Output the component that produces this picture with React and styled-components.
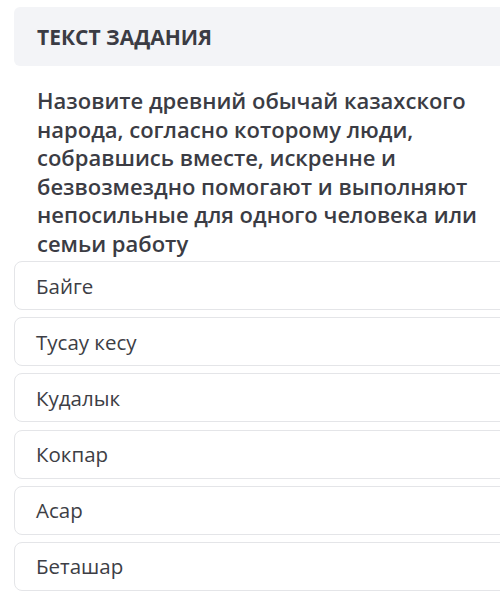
import React from 'react';
import styled, { createGlobalStyle } from 'styled-components';

const GlobalStyle = createGlobalStyle`
	html, body {
		margin: 0;
		padding: 0;
		background: #fff;
		overflow: hidden;
	}
	body {
		font-family: 'Open Sans', 'Liberation Sans', sans-serif;
	}
`;

const Page = styled.div`
	width: 520px;
	padding: 7px 0 0 14px;
	box-sizing: border-box;
`;

const TaskHeader = styled.div`
	height: 59px;
	display: flex;
	align-items: center;
	padding-left: 23px;
	background: #f3f4f7;
	border-radius: 6px;
	font-size: 21px;
	font-weight: 700;
	color: #3b3c44;
`;

const Question = styled.div`
	margin-top: 20px;
	padding: 0 30px 0 23px;
	font-size: 22px;
	line-height: 28.5px;
	font-weight: 600;
	color: #3b3c44;
`;

const Options = styled.div`
	margin-top: 4px;
	display: flex;
	flex-direction: column;
	gap: 7.2px;
`;

const Option = styled.div`
	height: 49px;
	box-sizing: border-box;
	display: flex;
	align-items: center;
	padding-left: 21px;
	border: 1px solid #e4e5e8;
	border-radius: 8px;
	background: #fff;
	font-size: 20.5px;
	color: #3d3e45;
`;

const answers = ['Байге', 'Тусау кесу', 'Кудалык', 'Кокпар', 'Асар', 'Беташар'];

export default function App() {
	return (
		<>
			<GlobalStyle />
			<Page>
				<TaskHeader>ТЕКСТ ЗАДАНИЯ</TaskHeader>
				<Question>
					Назовите древний обычай казахского народа, согласно которому люди,
					собравшись вместе, искренне и безвозмездно помогают и выполняют
					непосильные для одного человека или семьи работу
				</Question>
				<Options>
					{answers.map((a) => (
						<Option key={a}>{a}</Option>
					))}
				</Options>
			</Page>
		</>
	);
}
